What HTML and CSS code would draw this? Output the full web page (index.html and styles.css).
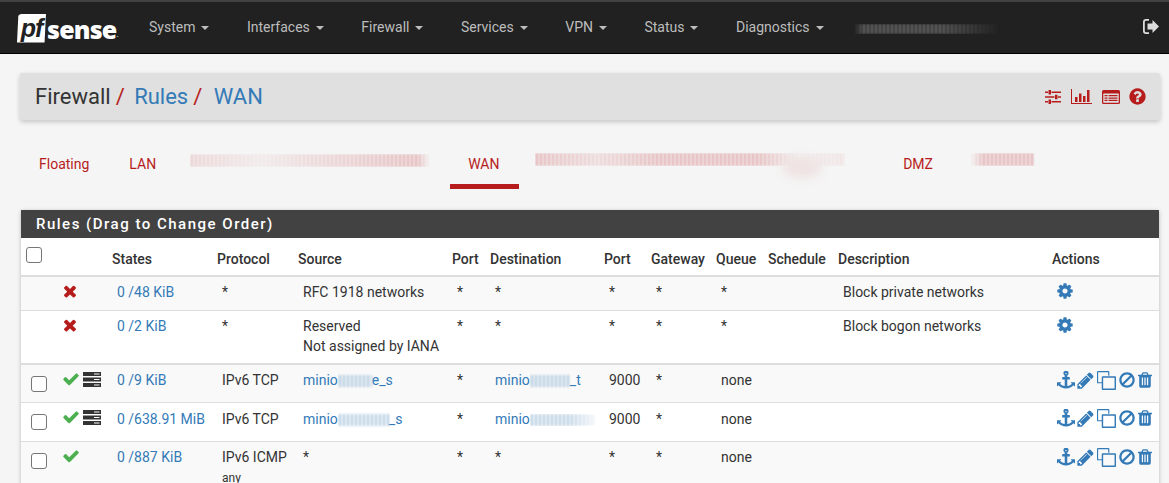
FILE: index.html
```html
<!DOCTYPE html>
<html lang="en">
<head>
<meta charset="utf-8">
<title>Firewall / Rules / WAN</title>
<link rel="stylesheet" href="styles.css">
</head>
<body>
<svg class="defs" width="0" height="0" aria-hidden="true">
  <symbol id="i-check" viewBox="0 0 1792 1792"><path d="M1671 566q0 40-28 68l-724 724-136 136q-28 28-68 28t-68-28l-136-136-362-362q-28-28-28-68t28-68l136-136q28-28 68-28t68 28l294 295 656-657q28-28 68-28t68 28l136 136q28 28 28 68z"/></symbol>
  <symbol id="i-times" viewBox="0 0 1792 1792"><path d="M1490 1322q0 40-28 68l-136 136q-28 28-68 28t-68-28l-294-294-294 294q-28 28-68 28t-68-28l-136-136q-28-28-28-68t28-68l294-294-294-294q-28-28-28-68t28-68l136-136q28-28 68-28t68 28l294 294 294-294q28-28 68-28t68 28l136 136q28 28 28 68t-28 68l-294 294 294 294q28 28 28 68z"/></symbol>
  <symbol id="i-ban" viewBox="0 0 1792 1792"><path d="M1440 893q0-161-87-295l-754 753q137 89 297 89 111 0 211.500-43.500t173.500-116.500 116-174.500 43-212.500zm-999 299l755-754q-135-91-300-91-148 0-273 73t-198 199-73 274q0 162 89 299zm1223-299q0 157-61 300t-163.500 246-245 164-298.500 61-298.500-61-245-164-163.500-246-61-300 61-299.500 163.500-245.500 245-164 298.500-61 298.500 61 245 164 163.500 245.500 61 299.500z"/></symbol>
  <symbol id="i-question" viewBox="0 0 1792 1792"><path d="M1024 1376v-192q0-14-9-23t-23-9h-192q-14 0-23 9t-9 23v192q0 14 9 23t23 9h192q14 0 23-9t9-23zm256-672q0-88-55.500-163t-138.500-116-170-41q-243 0-371 213-15 24 8 42l132 100q7 6 19 6 16 0 25-12 53-68 86-92 34-24 86-24 48 0 85.500 26t37.500 59q0 38-20 61t-68 45q-63 28-115.500 86.500t-52.500 125.500v36q0 14 9 23t23 9h192q14 0 23-9t9-23q0-19 21.500-49.500t54.500-49.500q32-18 49-28.500t46-35 44.500-48 28-60.500 12.500-81zm384 192q0 209-103 385.500t-279.500 279.500-385.500 103-385.500-103-279.500-279.500-103-385.500 103-385.500 279.500-279.500 385.500-103 385.500 103 279.500 279.500 103 385.500z"/></symbol>
  <symbol id="i-trash" viewBox="0 0 1792 1792"><path d="M704 1376v-704q0-14-9-23t-23-9h-64q-14 0-23 9t-9 23v704q0 14 9 23t23 9h64q14 0 23-9t9-23zm256 0v-704q0-14-9-23t-23-9h-64q-14 0-23 9t-9 23v704q0 14 9 23t23 9h64q14 0 23-9t9-23zm256 0v-704q0-14-9-23t-23-9h-64q-14 0-23 9t-9 23v704q0 14 9 23t23 9h64q14 0 23-9t9-23zm-544-992h448l-48-117q-7-9-17-11h-317q-10 2-17 11zm928 32v64q0 14-9 23t-23 9h-96v948q0 83-47 143.500t-113 60.500h-832q-66 0-113-58.500t-47-141.500v-952h-96q-14 0-23-9t-9-23v-64q0-14 9-23t23-9h309l70-167q15-37 54-63t79-26h320q40 0 79 26t54 63l70 167h309q14 0 23 9t9 23z"/></symbol>
  <symbol id="i-pencil" viewBox="0 0 1792 1792"><path d="M491 1536l91-91-235-235-91 91v107h128v128h107zm523-928q0-22-22-22-10 0-17 7l-542 542q-7 7-7 17 0 22 22 22 10 0 17-7l542-542q7-7 7-17zm-54-192l416 416-832 832h-416v-416zm683 96q0 53-37 90l-166 166-416-416 166-165q36-38 90-38 53 0 91 38l235 234q37 39 37 91z"/></symbol>
  <symbol id="i-cog" viewBox="0 0 1792 1792"><path d="M1152 896q0-106-75-181t-181-75-181 75-75 181 75 181 181 75 181-75 75-181zm512-109v222q0 12-8 23t-20 13l-185 28q-19 54-39 91 35 50 107 138 10 12 10 25t-9 23q-27 37-99 108t-94 71q-12 0-26-9l-138-108q-44 23-91 38-16 136-29 186-7 28-36 28h-222q-14 0-24.500-8.500t-11.500-21.500l-28-184q-49-16-90-37l-141 107q-10 9-25 9-14 0-25-11-126-114-165-168-7-10-7-23 0-12 8-23 15-21 51-66.500t54-70.500q-27-50-41-99l-183-27q-13-2-21-12.500t-8-23.500v-222q0-12 8-23t19-13l186-28q14-46 39-92-40-57-107-138-10-12-10-24 0-10 9-23 26-36 98.500-107.500t94.500-71.500q13 0 26 10l138 107q44-23 91-38 16-136 29-186 7-28 36-28h222q14 0 24.500 8.500t11.500 21.500l28 184q49 16 90 37l142-107q9-9 24-9 13 0 25 10 129 119 165 170 7 8 7 22 0 12-8 23-15 21-51 66.500t-54 70.500q26 50 41 98l183 28q13 2 21 12.500t8 23.500z"/></symbol>
  <symbol id="i-anchor" viewBox="0 0 1792 1792"><path d="M960 256q0-26-19-45t-45-19-45 19-19 45 19 45 45 19 45-19 19-45zm832 888v352q0 22-20 30-8 2-12 2-12 0-23-9l-93-93q-119 143-318.500 226.500t-429.500 83.500-429.500-83.500-318.500-226.500l-93 93q-9 9-23 9-4 0-12-2-20-8-20-30v-352q0-14 9-23t23-9h352q22 0 30 20 8 19-7 35l-100 100q67 91 189.500 153.500t271.500 82.500v-647h-192q-26 0-45-19t-19-45v-128q0-26 19-45t45-19h192v-163q-58-34-93-92.500t-35-128.500q0-106 75-181t181-75 181 75 75 181q0 70-35 128.500t-93 92.500v163h192q26 0 45 19t19 45v128q0 26-19 45t-45 19h-192v647q149-20 271.500-82.500t189.500-153.500l-100-100q-15-16-7-35 8-20 30-20h352q14 0 23 9t9 23z"/></symbol>
  <symbol id="i-clone" viewBox="0 0 20 20"><path fill-rule="evenodd" d="M1 0h11a1 1 0 0 1 1 1v4h-1.200V1.200H1.200v10.600H5V13H1a1 1 0 0 1-1-1V1a1 1 0 0 1 1-1zM6 5.500h13a1 1 0 0 1 1 1V19a1 1 0 0 1-1 1H6a1 1 0 0 1-1-1V6.500a1 1 0 0 1 1-1zM6.500 7v11.500h12V7z"/></symbol>
  <symbol id="i-server" viewBox="0 0 18 15"><path fill-rule="evenodd" d="M0 0h18v4H0zM11 1.500v1h5.500v-1zM0 5.500h18v4H0zM11 7v1h5.500V7zM0 11h18v4H0zM11 12.500v1h5.500v-1z"/></symbol>
  <symbol id="i-sliders" viewBox="0 0 16 14"><path d="M0 1.500h3v1.500H0zM6.500 1.500H16v1.500H6.500zM3.500 0H6v4.500H3.500zM0 6.200h9.500v1.500H0zM13 6.200h3v1.500h-3zM10 4.700h2.500v4.500H10zM0 11h3v1.500H0zM6.500 11H16v1.500H6.500zM3.500 9.500H6V14H3.500z"/></symbol>
  <symbol id="i-chart" viewBox="0 0 21 15"><path d="M0 0h1v14h21v1H0zM4 8h2.500v5H4zM8 4.500h2.500V13H8zM12 7h2.500v6H12zM16 1h2.500v12H16z"/></symbol>
  <symbol id="i-list" viewBox="0 0 18 14"><path fill-rule="evenodd" d="M1.500 0h15A1.500 1.500 0 0 1 18 1.500v11a1.500 1.500 0 0 1-1.500 1.500h-15A1.500 1.500 0 0 1 0 12.500v-11A1.500 1.500 0 0 1 1.500 0zM1.300 3.500v9.200h15.400V3.500zM2.500 5h3v1.300h-3zM6.500 5h9v1.300h-9zM2.500 7.400h3v1.300h-3zM6.500 7.400h9v1.300h-9zM2.500 9.800h3v1.300h-3zM6.500 9.800h9v1.300h-9z"/></symbol>
  <symbol id="i-signout" viewBox="0 0 16 15"><path d="M6 1.800H3A1.200 1.200 0 0 0 1.800 3v9A1.200 1.200 0 0 0 3 13.200h3V15H3a3 3 0 0 1-3-3V3a3 3 0 0 1 3-3h3zM9.500 1 16 7.500 9.500 14v-3.600H4.500V4.600h5z"/></symbol>
</svg>

<header class="topbar">
  <a class="logo" href="#"><span class="logo-pf">pf</span><span class="logo-sense">sense</span><span class="logo-dot">.</span></a>
  <ul class="menu">
    <li class="menu-item">System<span class="caret"></span></li>
    <li class="menu-item">Interfaces<span class="caret"></span></li>
    <li class="menu-item">Firewall<span class="caret"></span></li>
    <li class="menu-item">Services<span class="caret"></span></li>
    <li class="menu-item">VPN<span class="caret"></span></li>
    <li class="menu-item">Status<span class="caret"></span></li>
    <li class="menu-item">Diagnostics<span class="caret"></span></li>
    <li class="smear smear-host"></li>
  </ul>
  <svg class="signout"><use href="#i-signout"/></svg>
</header>

<main class="page">
  <section class="crumbs">
    <h1 class="crumb-title">
      <span>Firewall</span><span class="slash">/</span>
      <a class="crumb-a" href="#">Rules</a><span class="slash">/</span>
      <a class="crumb-b" href="#">WAN</a>
    </h1>
    <div class="crumb-icons">
      <svg class="ci ci-sliders"><use href="#i-sliders"/></svg>
      <svg class="ci ci-chart"><use href="#i-chart"/></svg>
      <svg class="ci ci-list"><use href="#i-list"/></svg>
      <svg class="ci ci-question"><use href="#i-question"/></svg>
    </div>
  </section>

  <nav class="tabs">
    <a class="tab" href="#">Floating</a>
    <a class="tab" href="#">LAN</a>
    <span class="tab tab-smear"><span class="smear smear-red smear-a"></span></span>
    <a class="tab active" href="#">WAN</a>
    <span class="tab tab-smear-b"><span class="smear smear-red smear-b"></span><span class="smear-dip"></span></span>
    <a class="tab" href="#">DMZ</a>
    <span class="tab tab-smear-c"><span class="smear smear-red smear-c"></span></span>
  </nav>

  <section class="panel">
    <h2 class="panel-heading">Rules (Drag to Change Order)</h2>
    <table class="rules">
      <colgroup>
        <col class="c-check"><col class="c-icon"><col class="c-states"><col class="c-proto"><col class="c-src"><col class="c-port"><col class="c-dst"><col class="c-port2"><col class="c-gw"><col class="c-queue"><col class="c-sched"><col class="c-desc"><col class="c-actions">
      </colgroup>
      <thead>
        <tr>
          <th class="th-check"><input type="checkbox" class="cb cb-head" aria-label="Select all"></th>
          <th></th><th>States</th><th>Protocol</th><th>Source</th><th>Port</th><th>Destination</th><th>Port</th><th>Gateway</th><th>Queue</th><th>Schedule</th><th>Description</th><th>Actions</th>
        </tr>
      </thead>
      <tbody>
        <tr class="r-short odd">
          <td></td>
          <td><svg class="st st-x"><use href="#i-times"/></svg></td>
          <td><a href="#">0 /48 KiB</a></td><td>*</td><td>RFC 1918 networks</td><td>*</td><td>*</td><td>*</td><td>*</td><td>*</td><td></td><td>Block private networks</td>
          <td><svg class="act act-cog"><use href="#i-cog"/></svg></td>
        </tr>
        <tr class="r-tall">
          <td></td>
          <td><svg class="st st-x"><use href="#i-times"/></svg></td>
          <td><a href="#">0 /2 KiB</a></td><td>*</td><td>Reserved<br>Not assigned by IANA</td><td>*</td><td>*</td><td>*</td><td>*</td><td>*</td><td></td><td>Block bogon networks</td>
          <td><svg class="act act-cog"><use href="#i-cog"/></svg></td>
        </tr>
        <tr class="r-rule r-3 odd">
          <td><input type="checkbox" class="cb" aria-label="Select rule"></td>
          <td><div class="status"><svg class="st st-ok"><use href="#i-check"/></svg><svg class="st st-srv"><use href="#i-server"/></svg></div></td>
          <td><a href="#">0 /9 KiB</a></td><td>IPv6 TCP</td>
          <td><a href="#" class="alias">minio<span class="smear smear-blue s-1"></span>e_s</a></td><td>*</td>
          <td><a href="#" class="alias">minio<span class="smear smear-blue s-2"></span>_t</a></td><td>9000</td><td>*</td><td>none</td><td></td><td></td>
          <td><div class="actions"><svg class="act a-anchor"><use href="#i-anchor"/></svg><svg class="act a-pencil"><use href="#i-pencil"/></svg><svg class="act a-clone"><use href="#i-clone"/></svg><svg class="act a-ban"><use href="#i-ban"/></svg><svg class="act a-trash"><use href="#i-trash"/></svg></div></td>
        </tr>
        <tr class="r-rule r-4">
          <td><input type="checkbox" class="cb" aria-label="Select rule"></td>
          <td><div class="status"><svg class="st st-ok"><use href="#i-check"/></svg><svg class="st st-srv"><use href="#i-server"/></svg></div></td>
          <td><a href="#">0 /638.91 MiB</a></td><td>IPv6 TCP</td>
          <td><a href="#" class="alias">minio<span class="smear smear-blue s-3"></span>_s</a></td><td>*</td>
          <td><a href="#" class="alias">minio<span class="smear smear-blue s-4"></span></a></td><td>9000</td><td>*</td><td>none</td><td></td><td></td>
          <td><div class="actions"><svg class="act a-anchor"><use href="#i-anchor"/></svg><svg class="act a-pencil"><use href="#i-pencil"/></svg><svg class="act a-clone"><use href="#i-clone"/></svg><svg class="act a-ban"><use href="#i-ban"/></svg><svg class="act a-trash"><use href="#i-trash"/></svg></div></td>
        </tr>
        <tr class="r-rule odd">
          <td><input type="checkbox" class="cb" aria-label="Select rule"></td>
          <td><div class="status"><svg class="st st-ok"><use href="#i-check"/></svg></div></td>
          <td><a href="#">0 /887 KiB</a></td><td>IPv6 ICMP<br><u class="any">any</u></td><td>*</td><td>*</td><td>*</td><td>*</td><td>*</td><td>none</td><td></td><td></td>
          <td><div class="actions"><svg class="act a-anchor"><use href="#i-anchor"/></svg><svg class="act a-pencil"><use href="#i-pencil"/></svg><svg class="act a-clone"><use href="#i-clone"/></svg><svg class="act a-ban"><use href="#i-ban"/></svg><svg class="act a-trash"><use href="#i-trash"/></svg></div></td>
        </tr>
      </tbody>
    </table>
  </section>
</main>
</body>
</html>
```

FILE: styles.css
```css
* { box-sizing: border-box; }
html, body { margin: 0; height: 483px; overflow: hidden; }
body { background: #f5f5f5; font-family: Roboto, "Liberation Sans", sans-serif; font-size: 14px; line-height: 20px; color: #333; }
a { color: #337ab7; text-decoration: none; }
.defs { position: absolute; }

.topbar { display: flex; align-items: center; height: 54px; background: #212121; border-top: 2px solid #424242; border-bottom: 1px solid #000; }
.logo { display: flex; align-items: center; width: 149px; height: 51px; padding-left: 17px; color: #fff; flex: none; }
.logo-pf { display: block; flex: none; width: 29px; height: 29px; margin-top: 1px; background: #fff; color: #212121; font: italic 700 25px/28px "Liberation Sans", sans-serif; text-align: center; letter-spacing: -1px; border-radius: 5px 0 0 0; clip-path: polygon(5% 0, 100% 0, 95% 100%, 0 100%); }
.logo-sense { font: 800 25px/28px "Open Sans", sans-serif; margin-left: 1px; letter-spacing: -.8px; margin-top: 3px; }
.logo-dot { font-size: 8px; margin-top: 14px; margin-left: 0; }
.menu { display: flex; align-items: center; list-style: none; margin: -2px 0 0; padding: 0; flex: 1; color: #bdbdbd; }
.menu-item { margin-right: 37.5px; white-space: nowrap; }
.caret { display: inline-block; margin-left: 6px; vertical-align: middle; border-top: 4px solid #bdbdbd; border-left: 4px solid transparent; border-right: 4px solid transparent; }
.signout { width: 16px; height: 15px; margin-right: 10px; fill: #ddd; margin-top: -2px; }

.smear { display: inline-block; height: 10px; filter: blur(.9px); background-image: repeating-linear-gradient(90deg, rgba(255,255,255,0) 0 1px, currentColor 1px 3px, rgba(255,255,255,0) 3px 4px); }
.smear-host { width: 146px; margin-left: -7px; margin-top: 5px; color: #777; -webkit-mask-image: linear-gradient(90deg, transparent, #000 6%, #000 60%, transparent); mask-image: linear-gradient(90deg, transparent, #000 6%, #000 60%, transparent); }
.smear-red { color: #dfa3a5; height: 13px; }
.smear-a { width: 240px; -webkit-mask-image: linear-gradient(90deg, rgba(0,0,0,.6), rgba(0,0,0,.2) 30%, rgba(0,0,0,.5) 50%, #000 95%, transparent); mask-image: linear-gradient(90deg, rgba(0,0,0,.6), rgba(0,0,0,.2) 30%, rgba(0,0,0,.5) 50%, #000 95%, transparent); }
.smear-b { width: 310px; -webkit-mask-image: linear-gradient(90deg, #000, rgba(0,0,0,.5) 20%, #000 40%, #000 72%, rgba(0,0,0,.15) 85%, rgba(0,0,0,.3)); mask-image: linear-gradient(90deg, #000, rgba(0,0,0,.5) 20%, #000 40%, #000 72%, rgba(0,0,0,.15) 85%, rgba(0,0,0,.3)); }
.smear-c { width: 65px; -webkit-mask-image: linear-gradient(90deg, transparent, #000 20%, #000); mask-image: linear-gradient(90deg, transparent, #000 20%, #000); }
.smear-dip { position: absolute; left: 263px; top: 14px; width: 40px; height: 20px; background: #efe2e2; filter: blur(5px); border-radius: 50%; }

.smear-blue { color: #a9c6de; height: 12px; vertical-align: -2px; }
.s-1 { width: 34px; } .s-2 { width: 40px; } .s-3 { width: 51px; } .s-4 { width: 66px; -webkit-mask-image: linear-gradient(90deg, #000 60%, rgba(0,0,0,.2)); mask-image: linear-gradient(90deg, #000 60%, rgba(0,0,0,.2)); }

.page { padding: 19px 9px 0 20px; }
.crumbs { display: flex; align-items: center; justify-content: space-between; height: 47px; padding: 0 14px 0 15px; background: #e0e0e0; border-radius: 2px; box-shadow: 0 2px 5px rgba(0,0,0,.2); }
.crumb-title { margin: 0; font-size: 22px; line-height: 26px; font-weight: 400; color: #333; white-space: nowrap; }
.slash { color: #b71c1c; margin: 0 3px 0 5px; }
.crumb-a { margin-left: 1px; }
.crumb-b { margin-left: 3px; }
.crumb-icons { display: flex; align-items: center; }
.ci { fill: #b71c1c; }
.ci-sliders { width: 16px; height: 14px; margin-right: 10px; }
.ci-chart { width: 21px; height: 15px; margin-right: 10px; }
.ci-list { width: 18px; height: 14px; margin-right: 8px; }
.ci-question { width: 19px; height: 19px; margin-right: -1px; }

.tabs { display: flex; height: 69px; padding-top: 24px; }
.tab { position: relative; display: block; height: 45px; padding: 10px 20px 0; color: #b71c1c; white-space: nowrap; }
.tab:first-child { padding-left: 19px; }
.tab.active { border-bottom: 5px solid #b71c1c; padding: 10px 18px 0; width: 69px; }
.tab-smear { width: 274px; padding: 8px 0 0 14px; }
.tab-smear-b { width: 364px; padding: 7px 0 0 16px; }
.tab-smear-c { padding: 7px 0 0 17px; }

.panel { margin-left: 1px; width: 1138px; background: #fff; box-shadow: 0 1px 4px rgba(0,0,0,.25); margin-top: 21px; }
.panel-heading { margin: 0; height: 28px; padding: 4px 15px; background: #424242; color: #fff; font-size: 15px; font-weight: 500; line-height: 20px; letter-spacing: 1.5px; }

.rules { width: 1138px; table-layout: fixed; border-collapse: collapse; }
.c-check { width: 37px; } .c-icon { width: 54px; } .c-states { width: 105px; } .c-proto { width: 81px; } .c-src { width: 154px; } .c-port { width: 38px; } .c-dst { width: 114px; } .c-port2 { width: 47px; } .c-gw { width: 65px; } .c-queue { width: 52px; } .c-sched { width: 70px; } .c-desc { width: 214px; } .c-actions { width: 107px; }
th { height: 38px; padding: 11px 0 0; text-align: left; vertical-align: top; font-weight: 500; color: #333; border-bottom: 2px solid #ddd; white-space: nowrap; }
.th-check { padding: 9px 0 0 5px; }
td { padding: 5px; vertical-align: top; white-space: nowrap; border-bottom: 1px solid #ddd; }
.odd td { background: #f9f9f9; }
.r-short td { height: 34px; }
.r-tall td { height: 54px; border-bottom: 2px solid #ddd; }
.r-rule td { height: 39px; }
.r-3 td { height: 38px; }
.r-4 td { padding-top: 6px; }
.any { font-size: 12px; line-height: 16px; }

.cb { appearance: none; -webkit-appearance: none; display: block; width: 16px; height: 16px; margin: 6px 0 0 5px; background: #fff; border: 1px solid #767676; border-radius: 3px; }
.r-4 .cb { margin-top: 5px; }
.cb-head { margin: 0; }
svg.st, svg.act { display: block; }
.status, .actions { display: flex; align-items: flex-start; }
.st-x { width: 18px; height: 18px; fill: #b71c1c; margin: 0 0 0 -2px; }
.st-ok { width: 18px; height: 18px; fill: #4caf50; margin: 0 0 0 -1px; }
.st-srv { width: 18px; height: 15px; fill: #333; margin: 2px 0 0 3px; }
.r-4 .st-ok { margin-top: -1px; }
.r-4 .st-srv { margin-top: 1px; }
.act { fill: #337ab7; flex: none; }
.act-cog { width: 18px; height: 18px; margin: 0 0 0 -1px; }
.a-anchor { width: 18px; height: 18px; margin: 1px 1px 0 0; }
.a-pencil { width: 19px; height: 19px; margin: 1px 0 0 0; }
.a-clone { width: 19px; height: 19px; margin: 1px 2px 0 2px; }
.a-ban { width: 18px; height: 18px; margin: 1px 0 0 0; }
.a-trash { width: 18px; height: 18px; margin: 1px 0 0 0; }
.r-4 .a-anchor, .r-4 .a-pencil, .r-4 .a-clone, .r-4 .a-ban, .r-4 .a-trash { margin-top: 0; }
```
